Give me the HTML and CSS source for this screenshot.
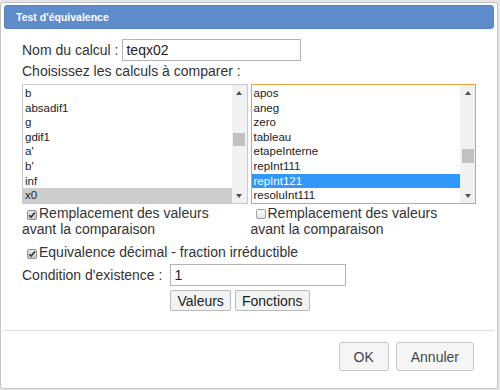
FILE: index.html
```html
<!DOCTYPE html>
<html lang="fr">
  <head>
    <meta charset="UTF-8" />
    <title>Test d'équivalence</title>
    <link rel="stylesheet" href="styles.css">
  </head>

  <body>
    <div class="dialog">
      <div class="titlebar">Test d'équivalence</div>

      <div class="content">
        <div class="name-row">
          <span class="label">Nom du calcul :</span>
          <input class="field name-field" type="text" value="teqx02">
        </div>

        <div class="prompt">Choisissez les calculs à comparer :</div>

        <div class="columns">
          <div class="column">
            <div class="listbox">
              <div class="items">
                <div class="item">b</div>
                <div class="item">absadif1</div>
                <div class="item">g</div>
                <div class="item">gdif1</div>
                <div class="item">a'</div>
                <div class="item">b'</div>
                <div class="item">inf</div>
                <div class="item item-inactive">x0</div>
              </div>
              <div class="scrollbar">
                <div class="arrow arrow-up"></div>
                <div class="track"><div class="thumb thumb-left"></div></div>
                <div class="arrow arrow-down"></div>
              </div>
            </div>
            <div class="check">
              <span class="box checked">
                <svg width="8" height="8" viewBox="0 0 8 8"><path d="M1.2 4.2 L3.1 6.1 L6.9 1.6" fill="none" stroke="#333" stroke-width="1.6"/></svg>
              </span>Remplacement des valeurs<br>avant la comparaison
            </div>
          </div>

          <div class="column">
            <div class="listbox focused">
              <div class="items">
                <div class="item">apos</div>
                <div class="item">aneg</div>
                <div class="item">zero</div>
                <div class="item">tableau</div>
                <div class="item">etapeInterne</div>
                <div class="item">repInt111</div>
                <div class="item item-selected">repInt121</div>
                <div class="item">resoluInt111</div>
              </div>
              <div class="scrollbar">
                <div class="arrow arrow-up"></div>
                <div class="track"><div class="thumb thumb-right"></div></div>
                <div class="arrow arrow-down"></div>
              </div>
            </div>
            <div class="check">
              <span class="box"></span>Remplacement des valeurs<br>avant la comparaison
            </div>
          </div>
        </div>

        <div class="check equiv">
          <span class="box checked">
            <svg width="8" height="8" viewBox="0 0 8 8"><path d="M1.2 4.2 L3.1 6.1 L6.9 1.6" fill="none" stroke="#333" stroke-width="1.6"/></svg>
          </span>Equivalence décimal - fraction irréductible
        </div>

        <div class="cond-grid">
          <span class="label">Condition d'existence :</span>
          <input class="field cond-field" type="text" value="1">
          <div class="tools">
            <button class="small-btn">Valeurs</button>
            <button class="small-btn">Fonctions</button>
          </div>
        </div>
      </div>

      <div class="buttonpane">
        <button class="dlg-btn">OK</button>
        <button class="dlg-btn">Annuler</button>
      </div>
    </div>
  </body>
</html>
```

FILE: styles.css
```css
body {
  margin: 0;
  background-color: #e6e6e6;
  font-family: "Liberation Sans", Arial, sans-serif;
  color: #333;
}

.dialog {
  margin-top: 2px;
  width: 498px;
  box-sizing: border-box;
  border: 1px solid #c5c5c5;
  border-radius: 3px;
  padding: 2px 3px 0;
  background: #fff;
}

.titlebar {
  height: 24px;
  box-sizing: border-box;
  border: 1px solid #5585c8;
  border-radius: 3px;
  background: #5f8dcc;
  color: #fff;
  font-weight: bold;
  font-size: 10.5px;
  line-height: 22px;
  padding: 0 11px;
}

.content {
  padding: 10px 18px 19px;
  font-size: 14px;
}

.name-row {
  display: flex;
  align-items: center;
  gap: 4px;
  height: 22px;
}

.field {
  box-sizing: border-box;
  height: 22px;
  border: 1px solid #b4b4b4;
  padding: 0 3px;
  font-family: inherit;
  font-size: 14px;
  color: #222;
  outline: none;
}

.name-field {
  width: 179px;
}

.prompt {
  margin-top: 1px;
  line-height: 18px;
}

.columns {
  margin-top: 4px;
  display: grid;
  grid-template-columns: 1fr 1fr;
  gap: 3px;
}

.listbox {
  display: flex;
  height: 120px;
  box-sizing: border-box;
  border: 1px solid #c9c9c9;
  background: #fff;
  font-size: 11.5px;
  color: #222;
}

.listbox.focused {
  border-color: #e6a33e;
}

.items {
  flex: 1;
  padding-top: 1px;
}

.item {
  height: 14.6px;
  line-height: 14.6px;
  padding-left: 2px;
}

.item-inactive {
  background: #cdcdcd;
}

.item-selected {
  background: #3297fd;
  color: #fff;
}

.scrollbar {
  width: 15px;
  display: flex;
  flex-direction: column;
  background: #f1f1f1;
}

.arrow {
  height: 15px;
  display: flex;
  align-items: center;
  justify-content: center;
}

.arrow::after {
  content: "";
  border-left: 3.5px solid transparent;
  border-right: 3.5px solid transparent;
}

.arrow-up::after {
  border-bottom: 4px solid #505050;
}

.arrow-down::after {
  border-top: 4px solid #505050;
}

.track {
  flex: 1;
}

.thumb {
  margin: 0 auto;
  width: 12px;
  height: 13px;
  background: #c1c1c1;
}

.thumb-left {
  margin-top: 33px;
}

.thumb-right {
  margin-top: 49px;
  height: 14px;
}

.check {
  margin-top: 1px;
  line-height: 16px;
}

.box {
  display: inline-flex;
  align-items: center;
  justify-content: center;
  width: 10px;
  height: 10px;
  box-sizing: border-box;
  margin: 0 2px 0 5px;
  border: 1px solid #a0a0a0;
  border-radius: 2px;
  background: linear-gradient(#fdfdfd, #e4e4e4);
  vertical-align: -1px;
}

.box.checked {
  background: linear-gradient(#e8e8e8, #c9c9c9);
  border-color: #8e8e8e;
}

.equiv {
  margin-top: 7px;
}

.cond-grid {
  margin-top: 4px;
  display: grid;
  grid-template-columns: max-content max-content;
  column-gap: 4px;
  row-gap: 4px;
  align-items: center;
}

.label {
  white-space: pre;
}

.cond-grid .label {
  padding-right: 4px;
}

.cond-field {
  width: 176px;
}

.tools {
  grid-column: 2;
  display: flex;
  gap: 4px;
}

.small-btn {
  height: 21px;
  padding: 0 6px;
  border: 1px solid #b9b9b9;
  border-radius: 2px;
  background: #f3f3f3;
  font-family: inherit;
  font-size: 14px;
  color: #222;
}

.buttonpane {
  border-top: 1px solid #dddddd;
  padding: 11px 20px 17px;
  display: flex;
  justify-content: flex-end;
  gap: 7px;
}

.dlg-btn {
  height: 29px;
  padding: 0 14px;
  border: 1px solid #c5c5c5;
  border-radius: 3px;
  background: #f6f6f6;
  font-family: inherit;
  font-size: 14px;
  color: #454545;
}
```
